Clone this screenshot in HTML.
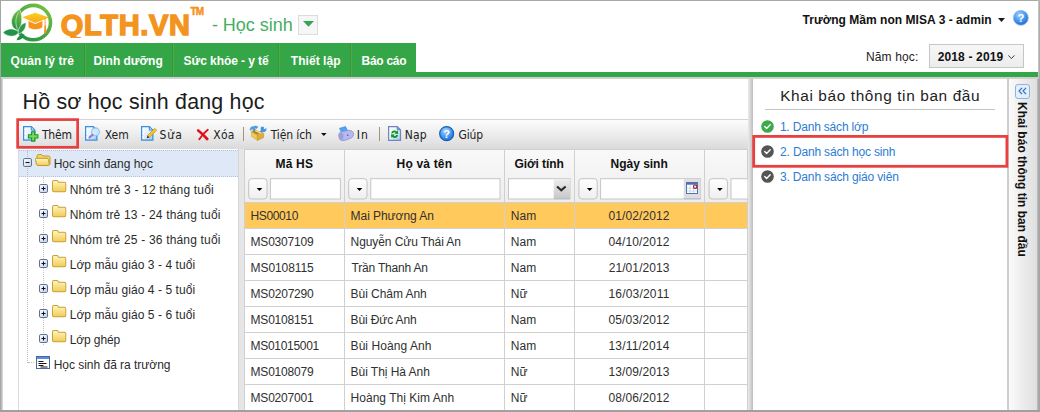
<!DOCTYPE html><html lang="vi"><head><meta charset="utf-8"><title>QLTH.VN - Học sinh</title><style>
*{box-sizing:border-box;margin:0;padding:0}
html,body{width:1040px;height:412px;overflow:hidden;background:#fff}
body{font-family:"Liberation Sans",sans-serif;position:relative}
.t{position:absolute;white-space:nowrap;line-height:20px;height:20px}
.a{position:absolute}
svg{position:absolute;overflow:visible}
</style></head><body>
<div class="a" style="left:0;top:0;width:1040px;height:43px;background:#fff"></div>
<svg style="left:0;top:0" width="60" height="46" viewBox="0 0 60 46">
<defs><linearGradient id="lg1" x1="1" y1="0" x2="0.3" y2="1"><stop offset="0" stop-color="#7cc242"/><stop offset="1" stop-color="#279646"/></linearGradient>
<linearGradient id="lg3" x1="0.6" y1="0" x2="0.3" y2="1"><stop offset="0" stop-color="#76bf43"/><stop offset="1" stop-color="#1f9247"/></linearGradient>
<linearGradient id="lg2" x1="0" y1="0" x2="0" y2="1"><stop offset="0" stop-color="#fbd01c"/><stop offset="1" stop-color="#f8a61e"/></linearGradient></defs>
<circle cx="33.300" cy="22.600" r="17.200" fill="none" stroke="url(#lg1)" stroke-width="3.600"/>
<path d="M19.600 9.300C13 13 9.500 20 12.500 26.500c1.500 2.500 4 3.800 6.300 4C22.500 24 22.800 15.500 19.600 9.300Z" fill="url(#lg3)" stroke="#fff" stroke-width=".6"/>
<path d="M18.400 12.500C15.500 17.500 15 23.500 17.600 29.500" fill="none" stroke="#e8f5e0" stroke-width=".6"/>
<path d="M3 32.400C7.500 27.800 14.500 27.600 19 32.500 15.500 37.400 7.500 37.300 3 32.400Z" fill="#229447" stroke="#fff" stroke-width=".5"/>
<path d="M26 22.600C20.500 24 17.800 28.500 18.300 34 23.500 32.500 26.300 28 26 22.600Z" fill="#2c9b47" stroke="#fff" stroke-width=".5"/>
<path d="M24.300 34.300C20.500 34.500 17.500 36.800 16.600 40.200 20.500 40.500 23.500 38 24.300 34.300Z" fill="#1f8f45"/>
<path d="M22.300 17.300L35.200 12.700L49.200 17.600L35.200 23Z" fill="url(#lg2)"/>
<path d="M28.500 21L35.200 23.900L42.400 21L42.400 27.300C38 30 32.500 30 28.500 27.300Z" fill="#f7941d"/>
<path d="M45 18.500L45.200 26" stroke="#f7941d" stroke-width=".9"/><path d="M44.400 25.500h1.500l.5 8h-2.400z" fill="#f7941d"/>
</svg>
<span id="logo" class="t" style="left:60.79px;top:14.95px;font-size:29px;font-weight:700;color:#f3941f;letter-spacing:0.679px;-webkit-text-stroke:1.5px #f3941f;">QLTH.VN</span>
<div class="a" style="left:58px;top:37.500px;width:40px;height:5.500px;background:#fff"></div>
<span id="tm" class="t" style="left:190.43px;top:1.94px;font-size:10px;font-weight:700;color:#f3941f;letter-spacing:-0.800px;-webkit-text-stroke:.5px #f3941f;">TM</span>
<span id="hs" class="t" style="left:211.91px;top:15.26px;font-size:18px;font-weight:400;color:#45ae62;letter-spacing:-0.031px;">- Học sinh</span>
<div class="a" style="left:298px;top:15px;width:20px;height:20px;background:#f6f6f6;border:1px solid #dcdcdc"></div>
<svg style="left:302.800px;top:21.200px" width="11" height="6"><path d="M0 0h11l-5.500 5.700z" fill="#2fa84f"/></svg>
<span id="user" class="t" style="left:802.50px;top:9.84px;font-size:12px;font-weight:700;color:#111;letter-spacing:0.035px;">Trường Mầm non MISA 3 - admin</span>
<svg style="left:998px;top:18px" width="7" height="4"><path d="M0 0h7l-3.500 3.900z" fill="#1a1a1a"/></svg>
<svg style="left:1013.2px;top:9.9px" width="15.7" height="15.7" viewBox="0 0 16 16"><defs><radialGradient id="hg1013.2" cx="0.4" cy="0.3" r="0.8"><stop offset="0" stop-color="#9fd0ff"/><stop offset="0.6" stop-color="#3b8ee8"/><stop offset="1" stop-color="#1c5fc0"/></radialGradient></defs><circle cx="8" cy="8" r="7.6" fill="url(#hg1013.2)" stroke="#8fb8e8" stroke-width="0.8"/><text x="8" y="12.2" text-anchor="middle" font-family="Liberation Sans, sans-serif" font-weight="700" font-size="11.5" fill="#fff">?</text></svg>
<div class="a" style="left:1px;top:43px;width:415px;height:34px;background:#35a648"></div>
<div class="a" style="left:416px;top:72px;width:624px;height:5px;background:#35a648"></div>
<div class="a" style="left:0;top:77px;width:1040px;height:2px;background:#cfcfcf"></div>
<div class="a" style="left:84px;top:43px;width:1px;height:34px;background:#2f9741"></div><div class="a" style="left:85px;top:43px;width:1px;height:34px;background:#56ab3e"></div>
<div class="a" style="left:172px;top:43px;width:1px;height:34px;background:#2f9741"></div><div class="a" style="left:173px;top:43px;width:1px;height:34px;background:#56ab3e"></div>
<div class="a" style="left:278px;top:43px;width:1px;height:34px;background:#2f9741"></div><div class="a" style="left:279px;top:43px;width:1px;height:34px;background:#56ab3e"></div>
<div class="a" style="left:350px;top:43px;width:1px;height:34px;background:#2f9741"></div><div class="a" style="left:351px;top:43px;width:1px;height:34px;background:#56ab3e"></div>
<span id="tab0" class="t" style="left:10.58px;top:51.34px;font-size:12px;font-weight:700;color:#fff;letter-spacing:0.057px;">Quản lý trẻ</span>
<span id="tab1" class="t" style="left:93.60px;top:51.34px;font-size:12px;font-weight:700;color:#fff;letter-spacing:-0.010px;">Dinh dưỡng</span>
<span id="tab2" class="t" style="left:183.60px;top:51.34px;font-size:12px;font-weight:700;color:#fff;letter-spacing:-0.067px;">Sức khỏe - y tế</span>
<span id="tab3" class="t" style="left:290.82px;top:51.34px;font-size:12px;font-weight:700;color:#fff;letter-spacing:0.051px;">Thiết lập</span>
<span id="tab4" class="t" style="left:361.60px;top:51.34px;font-size:12px;font-weight:700;color:#fff;letter-spacing:-0.285px;">Báo cáo</span>
<span id="namhoc" class="t" style="left:865.97px;top:47.09px;font-size:12px;font-weight:400;color:#222;letter-spacing:0.139px;">Năm học:</span>
<div class="a" style="left:929px;top:44px;width:95px;height:24px;border:1px solid #c6c6c6;background:linear-gradient(#f7f7f7,#ececec)"></div>
<span id="year" class="t" style="left:937.64px;top:46.64px;font-size:12px;font-weight:700;color:#111;letter-spacing:0.155px;">2018 - 2019</span>
<svg style="left:1008px;top:55px" width="7" height="5"><path d="M.4 .4L3.400 3.600L6.400 .4" fill="none" stroke="#3a3f50" stroke-width="1"/></svg>
<div class="a" style="left:0;top:79px;width:1040px;height:333px;background:#fff"></div>
<span id="title" class="t" style="left:22.55px;top:91.88px;font-size:21.4px;font-weight:400;color:#1c1c1c;letter-spacing:0.197px;">Hồ sơ học sinh đang học</span>
<div class="a" style="left:18px;top:119px;width:730px;height:30px;border-top:1px solid #d4d4d4;background:linear-gradient(#fcfcfc,#f0f0f0 40%,#dadada)"></div>
<svg width="0" height="0" style="left:0;top:0"><defs><linearGradient id="pgg" x1="0" y1="0" x2="1" y2="1"><stop offset="0" stop-color="#fff"/><stop offset=".45" stop-color="#e6f1fc"/><stop offset="1" stop-color="#9cc8f2"/></linearGradient><radialGradient id="hgr" cx="0.42" cy="0.3" r="0.75"><stop offset="0" stop-color="#a8d4ff"/><stop offset="0.55" stop-color="#4a9cf0"/><stop offset="1" stop-color="#1c66c8"/></radialGradient></defs></svg>
<svg style="left:22.7px;top:126.1px" width="17" height="16" viewBox="0 0 17 16"><path d="M.65 .65h7.700l3.500 3.500v9.900h-11.200z" fill="url(#pgg)" stroke="#3b8fe0" stroke-width="1.300"/><path d="M8.350 .65v3.500h3.500z" fill="#cfe5fa" stroke="#3b8fe0" stroke-width="1"/><path d="M2.200 2.500v2M2.200 6v2.500M2.200 10v2.500" stroke="#fff" stroke-width="1.200"/><path d="M8.600 5.700h3.200v3.100h3.100v3.200h-3.100v3.100h-3.200v-3.100h-3.100v-3.200h3.100z" fill="#78d65e" stroke="#189a1c" stroke-width="1.100"/></svg>
<svg style="left:85px;top:126.1px" width="17" height="16" viewBox="0 0 17 16"><path d="M.65 .65h7.700l3.500 3.500v9.900h-11.200z" fill="url(#pgg)" stroke="#3b8fe0" stroke-width="1.300"/><path d="M8.350 .65v3.500h3.500z" fill="#cfe5fa" stroke="#3b8fe0" stroke-width="1"/><path d="M2.200 2.500v2M2.200 6v2.500M2.200 10v2.500" stroke="#fff" stroke-width="1.200"/><circle cx="10.500" cy="5.800" r="3.900" fill="#d4eafc" fill-opacity=".92" stroke="#8cc0ee" stroke-width="1.100"/><path d="M7.600 8.800l-3.100 2.800" stroke="#8f78d8" stroke-width="2" stroke-linecap="round"/></svg>
<svg style="left:140.8px;top:126.1px" width="17" height="16" viewBox="0 0 17 16"><path d="M.65 .65h7.700l3.500 3.500v9.900h-11.200z" fill="url(#pgg)" stroke="#3b8fe0" stroke-width="1.300"/><path d="M8.350 .65v3.500h3.500z" fill="#cfe5fa" stroke="#3b8fe0" stroke-width="1"/><path d="M2.200 2.500v2M2.200 6v2.500M2.200 10v2.500" stroke="#fff" stroke-width="1.200"/><path d="M13.800 2.300l1.900 1.900-7.300 7.200-1.900-1.900z" fill="#f2c436" stroke="#c89618" stroke-width=".7"/><path d="M6.500 9.500l1.900 1.900-2.600 .8z" fill="#3a3020"/></svg>
<svg style="left:196.500px;top:128.500px" width="12" height="11" viewBox="0 0 12 11"><path d="M1.200 1.500q4.500 3.500 9 8.500" stroke="#e0121e" stroke-width="2.700" stroke-linecap="round" fill="none"/><path d="M10.800 .8q-5 4-8.500 9.400" stroke="#e0121e" stroke-width="1.900" stroke-linecap="round" fill="none"/></svg>
<svg style="left:246px;top:122px" width="24" height="22" viewBox="0 0 24 22">
<path d="M4 7.300Q4.300 4.800 7.500 4.500Q10.500 3.600 11.800 4.800L10.800 6.400Q9.500 5.800 8.800 6.300L10.700 11.800L8.600 12.500L6.700 6.800Q5.200 7 4.800 8.600Z" fill="#4aa3ec" stroke="#2f86d8" stroke-width=".5"/>
<path d="M15.200 5.200Q16.800 4.600 17.800 5.300L17.300 7L18.800 7.600L20 6.400Q20.500 8 19.300 9.200Q18.300 10 17 9.600L14.500 12L13 10.800L15.300 8.200Q14.600 6.600 15.200 5.200Z" fill="#3a96e8" stroke="#2a7ed0" stroke-width=".5"/>
<path d="M5.300 9.700L9 7.600L14.700 9.900L11.300 13.100Z" fill="#b58428"/>
<path d="M5.300 9.700L11.300 13.100L11.500 18.400L5.600 14.500Z" fill="#efcb58" stroke="#c79a2c" stroke-width=".5"/>
<path d="M11.300 13.100L14.700 9.900L17.800 11.600L17.600 15.600L11.500 18.400Z" fill="#dcae3c" stroke="#b88a22" stroke-width=".5"/>
<path d="M9.300 8.600L15.300 11.200" stroke="#f6e090" stroke-width="1.300"/>
</svg>
<svg style="left:320.800px;top:133px" width="6" height="3"><path d="M0 0h5.600l-2.800 3z" fill="#111"/></svg>
<svg style="left:337.500px;top:126.300px" width="17" height="15" viewBox="0 0 17 15"><path d="M1.500 2.300l6-1.800 2.200 4.300-6.200 2z" fill="#4ea6ee" stroke="#3a8cdc" stroke-width=".6"/><path d="M.7 9q0-2.500 3-3.300l6-1.300q5.500-.5 6 3.800 0 2.500-2.500 3.800l-6 2.300q-3 1-5-.5-1.500-1.500-1.500-4.800z" fill="#b6b8ee" stroke="#8c8ed6" stroke-width=".8"/><path d="M.9 9.500q.3-2.500 2.500-2.800 2 .2 2.200 3.300 0 3-1.800 4.300-2.800-.3-2.900-4.800z" fill="#9c9ee0"/><circle cx="9.700" cy="9.200" r=".8" fill="#54569a"/></svg>
<svg style="left:388px;top:126px" width="14" height="16" viewBox="0 0 14 16"><path d="M.6 .6h8.600l3.300 3.300v10.500h-11.900z" fill="url(#pgg)" stroke="#7484b8" stroke-width="1.200"/><path d="M9.200 .6v3.300h3.300z" fill="#5aa0ec" stroke="#7484b8" stroke-width=".8"/><path d="M3.200 7.300q.3-2.700 3.300-2.900 1.500 0 2.400 1l1-1 .3 3.600-3.600-.3 1-1q-1.600-1-2.600 .5z" fill="#0c9a1e"/><path d="M10 9q-.3 2.700-3.300 2.900-1.500 0-2.400-1l-1 1-.3-3.600 3.600 .3-1 1q1.600 1 2.600-.5z" fill="#0c9a1e"/></svg>
<svg style="left:438.9px;top:125.8px" width="15.3" height="15.3" viewBox="0 0 16 16"><circle cx="8" cy="8" r="7.300" fill="url(#hgr)" stroke="#1a5cb8" stroke-width="1.200"/><text x="8" y="12.300" text-anchor="middle" font-family="Liberation Sans, sans-serif" font-weight="700" font-size="11.500" fill="#fff">?</text></svg>
<div class="a" style="left:243.0px;top:127px;width:1px;height:14px;background:#a39676"></div>
<div class="a" style="left:379.0px;top:127px;width:1px;height:14px;background:#a39676"></div>
<span id="tb0" class="t" style="left:41.97px;top:124.64px;font-size:12px;font-weight:400;color:#222;letter-spacing:-0.223px;font-family:'DejaVu Sans Condensed','DejaVu Sans',sans-serif;">Thêm</span>
<span id="tb1" class="t" style="left:104.74px;top:124.64px;font-size:12px;font-weight:400;color:#222;letter-spacing:0.008px;font-family:'DejaVu Sans Condensed','DejaVu Sans',sans-serif;">Xem</span>
<span id="tb2" class="t" style="left:159.59px;top:124.64px;font-size:12px;font-weight:400;color:#222;letter-spacing:0.929px;font-family:'DejaVu Sans Condensed','DejaVu Sans',sans-serif;">Sửa</span>
<span id="tb3" class="t" style="left:213.36px;top:124.64px;font-size:12px;font-weight:400;color:#222;letter-spacing:0.143px;font-family:'DejaVu Sans Condensed','DejaVu Sans',sans-serif;">Xóa</span>
<span id="tb4" class="t" style="left:270.68px;top:124.64px;font-size:12px;font-weight:400;color:#222;letter-spacing:-0.098px;font-family:'DejaVu Sans Condensed','DejaVu Sans',sans-serif;">Tiện ích</span>
<span id="tb5" class="t" style="left:356.76px;top:124.64px;font-size:12px;font-weight:400;color:#222;letter-spacing:1.000px;font-family:'DejaVu Sans Condensed','DejaVu Sans',sans-serif;">In</span>
<span id="tb6" class="t" style="left:404.85px;top:124.64px;font-size:12px;font-weight:400;color:#222;letter-spacing:0.168px;font-family:'DejaVu Sans Condensed','DejaVu Sans',sans-serif;">Nạp</span>
<span id="tb7" class="t" style="left:458.42px;top:124.64px;font-size:12px;font-weight:400;color:#222;letter-spacing:-0.104px;font-family:'DejaVu Sans Condensed','DejaVu Sans',sans-serif;">Giúp</span>
<div class="a" style="left:18px;top:149px;width:1px;height:263px;background:#dcdcdc"></div>
<div class="a" style="left:19px;top:150px;width:218.500px;height:26.500px;background:#dfe8f6;border-top:1px dotted #b4c4de;border-bottom:1px dotted #b4c4de"></div>
<div class="a" style="left:237.500px;top:149px;width:7px;height:263px;background:#e6e6e6;border-left:1px solid #d6d6d6"></div>
<svg width="0" height="0" style="left:0;top:0"><defs><linearGradient id="pmg" x1="0" y1="0" x2="1" y2="1"><stop offset="0" stop-color="#fff"/><stop offset="1" stop-color="#c3cfe4"/></linearGradient><linearGradient id="fg" x1="0" y1="0" x2="0" y2="1"><stop offset="0" stop-color="#fff6c0"/><stop offset="1" stop-color="#f1cb55"/></linearGradient></defs></svg>
<div class="a" style="left:27px;top:151px;width:0;height:212px;border-left:1px dotted #bdbdbd"></div>
<div class="a" style="left:28px;top:362px;width:6px;height:0;border-top:1px dotted #bdbdbd"></div>
<div class="a" style="left:43px;top:177px;width:0;height:168px;border-left:1px dotted #c4c4c4"></div>
<span id="tr0" class="t" style="left:53.66px;top:153.84px;font-size:12px;font-weight:400;color:#2b2b2b;letter-spacing:-0.005px;">Học sinh đang học</span>
<svg style="left:23.4px;top:157.5px" width="9" height="9" viewBox="0 0 9 9"><rect x=".5" y=".5" width="8" height="8" rx="1.300" fill="url(#pmg)" stroke="#5d7198" stroke-width="1"/><path d="M2.500 4.500h4" stroke="#111" stroke-width="1"/></svg>
<svg style="left:34.5px;top:154px" width="16" height="12" viewBox="0 0 16 12"><path d="M2 10.500v-8.500q0-1.500 1.500-1.500h3l1.500 1.500h5.500q1.500 0 1.500 1.500v7" fill="#f3d36a" stroke="#c49a2c" stroke-width="1"/><path d="M3 11.500q-1.300 0-1.600-1.300l-.9-4.700q-.2-1.200 1-1.200h10.500q1.200 0 1.400 1.200l.9 4.700q.2 1.300-1.100 1.300z" fill="url(#fg)" stroke="#c49a2c" stroke-width="1"/></svg>
<span id="tr1" class="t" style="left:69.66px;top:179.84px;font-size:12px;font-weight:400;color:#2b2b2b;letter-spacing:0.185px;">Nhóm trẻ 3 - 12 tháng tuổi</span>
<svg style="left:39.2px;top:183.8px" width="9" height="9" viewBox="0 0 9 9"><rect x=".5" y=".5" width="8" height="8" rx="1.300" fill="url(#pmg)" stroke="#5d7198" stroke-width="1"/><path d="M2.500 4.500h4" stroke="#111" stroke-width="1"/><path d="M4.500 2.500v4" stroke="#111" stroke-width="1"/></svg>
<svg style="left:51.8px;top:180.1px" width="14.300" height="12.300" preserveAspectRatio="none" viewBox="0 0 15 12"><path d="M.5 10v-8q0-1.500 1.500-1.500h3q1 0 1.500 1l.5 .8h6q1.500 0 1.500 1.500v6.200q0 1.500-1.500 1.500h-11q-1.500 0-1.500-1.500z" fill="url(#fg)" stroke="#c8a033" stroke-width="1"/></svg>
<span id="tr2" class="t" style="left:69.66px;top:204.86px;font-size:12px;font-weight:400;color:#2b2b2b;letter-spacing:0.183px;">Nhóm trẻ 13 - 24 tháng tuổi</span>
<svg style="left:39.2px;top:208.82000000000002px" width="9" height="9" viewBox="0 0 9 9"><rect x=".5" y=".5" width="8" height="8" rx="1.300" fill="url(#pmg)" stroke="#5d7198" stroke-width="1"/><path d="M2.500 4.500h4" stroke="#111" stroke-width="1"/><path d="M4.500 2.500v4" stroke="#111" stroke-width="1"/></svg>
<svg style="left:51.8px;top:205.12px" width="14.300" height="12.300" preserveAspectRatio="none" viewBox="0 0 15 12"><path d="M.5 10v-8q0-1.500 1.500-1.500h3q1 0 1.500 1l.5 .8h6q1.500 0 1.500 1.500v6.200q0 1.500-1.500 1.500h-11q-1.500 0-1.500-1.500z" fill="url(#fg)" stroke="#c8a033" stroke-width="1"/></svg>
<span id="tr3" class="t" style="left:69.66px;top:229.88px;font-size:12px;font-weight:400;color:#2b2b2b;letter-spacing:0.183px;">Nhóm trẻ 25 - 36 tháng tuổi</span>
<svg style="left:39.2px;top:233.84px" width="9" height="9" viewBox="0 0 9 9"><rect x=".5" y=".5" width="8" height="8" rx="1.300" fill="url(#pmg)" stroke="#5d7198" stroke-width="1"/><path d="M2.500 4.500h4" stroke="#111" stroke-width="1"/><path d="M4.500 2.500v4" stroke="#111" stroke-width="1"/></svg>
<svg style="left:51.8px;top:230.14px" width="14.300" height="12.300" preserveAspectRatio="none" viewBox="0 0 15 12"><path d="M.5 10v-8q0-1.500 1.500-1.500h3q1 0 1.500 1l.5 .8h6q1.500 0 1.500 1.500v6.200q0 1.500-1.500 1.500h-11q-1.500 0-1.500-1.500z" fill="url(#fg)" stroke="#c8a033" stroke-width="1"/></svg>
<span id="tr4" class="t" style="left:69.66px;top:254.90px;font-size:12px;font-weight:400;color:#2b2b2b;letter-spacing:0.069px;">Lớp mẫu giáo 3 - 4 tuổi</span>
<svg style="left:39.2px;top:258.86px" width="9" height="9" viewBox="0 0 9 9"><rect x=".5" y=".5" width="8" height="8" rx="1.300" fill="url(#pmg)" stroke="#5d7198" stroke-width="1"/><path d="M2.500 4.500h4" stroke="#111" stroke-width="1"/><path d="M4.500 2.500v4" stroke="#111" stroke-width="1"/></svg>
<svg style="left:51.8px;top:255.16px" width="14.300" height="12.300" preserveAspectRatio="none" viewBox="0 0 15 12"><path d="M.5 10v-8q0-1.500 1.500-1.500h3q1 0 1.500 1l.5 .8h6q1.500 0 1.500 1.500v6.200q0 1.500-1.500 1.500h-11q-1.500 0-1.500-1.500z" fill="url(#fg)" stroke="#c8a033" stroke-width="1"/></svg>
<span id="tr5" class="t" style="left:69.66px;top:279.92px;font-size:12px;font-weight:400;color:#2b2b2b;letter-spacing:0.069px;">Lớp mẫu giáo 4 - 5 tuổi</span>
<svg style="left:39.2px;top:283.88px" width="9" height="9" viewBox="0 0 9 9"><rect x=".5" y=".5" width="8" height="8" rx="1.300" fill="url(#pmg)" stroke="#5d7198" stroke-width="1"/><path d="M2.500 4.500h4" stroke="#111" stroke-width="1"/><path d="M4.500 2.500v4" stroke="#111" stroke-width="1"/></svg>
<svg style="left:51.8px;top:280.18px" width="14.300" height="12.300" preserveAspectRatio="none" viewBox="0 0 15 12"><path d="M.5 10v-8q0-1.500 1.500-1.500h3q1 0 1.500 1l.5 .8h6q1.500 0 1.500 1.500v6.200q0 1.500-1.500 1.500h-11q-1.500 0-1.500-1.500z" fill="url(#fg)" stroke="#c8a033" stroke-width="1"/></svg>
<span id="tr6" class="t" style="left:69.66px;top:304.94px;font-size:12px;font-weight:400;color:#2b2b2b;letter-spacing:0.069px;">Lớp mẫu giáo 5 - 6 tuổi</span>
<svg style="left:39.2px;top:308.90000000000003px" width="9" height="9" viewBox="0 0 9 9"><rect x=".5" y=".5" width="8" height="8" rx="1.300" fill="url(#pmg)" stroke="#5d7198" stroke-width="1"/><path d="M2.500 4.500h4" stroke="#111" stroke-width="1"/><path d="M4.500 2.500v4" stroke="#111" stroke-width="1"/></svg>
<svg style="left:51.8px;top:305.20000000000005px" width="14.300" height="12.300" preserveAspectRatio="none" viewBox="0 0 15 12"><path d="M.5 10v-8q0-1.500 1.500-1.500h3q1 0 1.500 1l.5 .8h6q1.500 0 1.500 1.500v6.200q0 1.500-1.500 1.500h-11q-1.500 0-1.500-1.500z" fill="url(#fg)" stroke="#c8a033" stroke-width="1"/></svg>
<span id="tr7" class="t" style="left:69.66px;top:329.96px;font-size:12px;font-weight:400;color:#2b2b2b;letter-spacing:-0.098px;">Lớp ghép</span>
<svg style="left:39.2px;top:333.92px" width="9" height="9" viewBox="0 0 9 9"><rect x=".5" y=".5" width="8" height="8" rx="1.300" fill="url(#pmg)" stroke="#5d7198" stroke-width="1"/><path d="M2.500 4.500h4" stroke="#111" stroke-width="1"/><path d="M4.500 2.500v4" stroke="#111" stroke-width="1"/></svg>
<svg style="left:51.8px;top:330.22px" width="14.300" height="12.300" preserveAspectRatio="none" viewBox="0 0 15 12"><path d="M.5 10v-8q0-1.500 1.500-1.500h3q1 0 1.500 1l.5 .8h6q1.500 0 1.500 1.500v6.200q0 1.500-1.500 1.500h-11q-1.500 0-1.500-1.500z" fill="url(#fg)" stroke="#c8a033" stroke-width="1"/></svg>
<span id="tr8" class="t" style="left:53.66px;top:354.98px;font-size:12px;font-weight:400;color:#2b2b2b;letter-spacing:-0.022px;">Học sinh đã ra trường</span>
<svg style="left:36px;top:356px" width="14" height="13" viewBox="0 0 14 13"><rect x=".5" y=".5" width="13" height="12" fill="#fff" stroke="#4a66a8" stroke-width="1"/><rect x="1" y="1" width="12" height="2" fill="#5b8be0"/><path d="M2.500 5.500h5M2.500 7.500h8M2.500 9.500h5M4.500 11h7" stroke="#111" stroke-width="1"/></svg>
<div class="a" style="left:244.0px;top:149px;width:503.5px;height:53.500px;background:linear-gradient(#f9f9f9,#ededed);border-left:1px solid #d0d0d0;border-top:1px solid #d0d0d0"></div>
<div class="a" style="left:244.5px;top:202.500px;width:503.0px;height:26px;background:#ffc95c"></div>
<div class="a" style="left:244.5px;top:202.0px;width:503.0px;height:1px;background:#d0d0d0"></div>
<div class="a" style="left:244.5px;top:228.0px;width:503.0px;height:1px;background:#d0d0d0"></div>
<div class="a" style="left:244.5px;top:254.0px;width:503.0px;height:1px;background:#d0d0d0"></div>
<div class="a" style="left:244.5px;top:280.0px;width:503.0px;height:1px;background:#d0d0d0"></div>
<div class="a" style="left:244.5px;top:306.0px;width:503.0px;height:1px;background:#d0d0d0"></div>
<div class="a" style="left:244.5px;top:332.0px;width:503.0px;height:1px;background:#d0d0d0"></div>
<div class="a" style="left:244.5px;top:358.0px;width:503.0px;height:1px;background:#d0d0d0"></div>
<div class="a" style="left:244.5px;top:384.0px;width:503.0px;height:1px;background:#d0d0d0"></div>
<div class="a" style="left:244.5px;top:410.0px;width:503.0px;height:1px;background:#d0d0d0"></div>
<div class="a" style="left:244.0px;top:149.500px;width:1px;height:263px;background:#d0d0d0"></div>
<div class="a" style="left:344.0px;top:149.500px;width:1px;height:263px;background:#d0d0d0"></div>
<div class="a" style="left:504.0px;top:149.500px;width:1px;height:263px;background:#d0d0d0"></div>
<div class="a" style="left:574.0px;top:149.500px;width:1px;height:263px;background:#d0d0d0"></div>
<div class="a" style="left:703.5px;top:149.500px;width:1px;height:263px;background:#d0d0d0"></div>
<div class="a" style="left:747.0px;top:149.500px;width:1px;height:263px;background:#d0d0d0"></div>
<span id="h0" class="t" style="left:275.60px;top:154.14px;font-size:12px;font-weight:700;color:#111;letter-spacing:0.174px;">Mã HS</span>
<span id="h1" class="t" style="left:396.60px;top:154.14px;font-size:12px;font-weight:700;color:#111;letter-spacing:0.177px;">Họ và tên</span>
<span id="h2" class="t" style="left:514.50px;top:154.14px;font-size:12px;font-weight:700;color:#111;letter-spacing:-0.070px;">Giới tính</span>
<span id="h3" class="t" style="left:610.60px;top:154.14px;font-size:12px;font-weight:700;color:#111;letter-spacing:-0.023px;">Ngày sinh</span>
<svg style="left:0;top:0" width="747.5" height="412" viewBox="0 0 747.5 412"><defs><linearGradient id="fbg" x1="0" y1="0" x2="0" y2="1"><stop offset="0" stop-color="#fefefe"/><stop offset="1" stop-color="#efefef"/></linearGradient><linearGradient id="cbg" x1="0" y1="0" x2="0" y2="1"><stop offset="0" stop-color="#ededed"/><stop offset="1" stop-color="#c6c6c6"/></linearGradient></defs><rect x="248.70" y="178.70" width="18.300" height="20.30" rx="3" fill="url(#fbg)" stroke="#c2c2c2" stroke-width="1"/><path d="M256.70 188h5.600l-2.800 3.100z" fill="#000"/><rect x="270.40" y="178.70" width="70.00" height="20.30" fill="#fff" stroke="#c6c6c6" stroke-width="1"/><rect x="348.70" y="178.70" width="18.300" height="20.30" rx="3" fill="url(#fbg)" stroke="#c2c2c2" stroke-width="1"/><path d="M356.70 188h5.600l-2.800 3.100z" fill="#000"/><rect x="370.80" y="178.70" width="129.20" height="20.30" fill="#fff" stroke="#c6c6c6" stroke-width="1"/><rect x="508.50" y="178.70" width="61.50" height="20.30" fill="#fff" stroke="#c6c6c6" stroke-width="1"/><rect x="553.700" y="179.200" width="16.300" height="19.800" fill="url(#cbg)"/><path d="M553.700 198.700h16.300" stroke="#b4bcd0" stroke-width="1"/><path d="M557 186.500l4.300 3.900 4.300-3.900" fill="none" stroke="#2c2c2c" stroke-width="2.100"/><rect x="578.90" y="178.70" width="18.300" height="20.30" rx="3" fill="url(#fbg)" stroke="#c2c2c2" stroke-width="1"/><path d="M586.90 188h5.600l-2.800 3.100z" fill="#000"/><rect x="600.60" y="178.70" width="99.90" height="20.30" fill="#fff" stroke="#c6c6c6" stroke-width="1"/><rect x="683.700" y="179.200" width="16.800" height="19.800" fill="#dedede"/><path d="M683.700 198.700h16.800" stroke="#b4bcd0" stroke-width="1"/><g transform="translate(686,182)"><rect x=".5" y=".5" width="11" height="11" fill="#fff" stroke="#5474b0" stroke-width="1"/><rect x=".5" y=".5" width="11" height="2.200" fill="#4f6fb0"/><path d="M4 3v8M7.500 3v8M1 6.200h10M1 9h10" stroke="#c2cee6" stroke-width=".8"/><circle cx="9.200" cy="4.700" r="1.700" fill="#fff" stroke="#a01028" stroke-width="1.100"/></g><rect x="709.10" y="178.70" width="18.300" height="20.30" rx="3" fill="url(#fbg)" stroke="#c2c2c2" stroke-width="1"/><path d="M717.10 188h5.600l-2.800 3.100z" fill="#000"/><rect x="731.00" y="178.70" width="17.00" height="20.30" fill="#fff" stroke="#c6c6c6" stroke-width="1"/></svg>
<span id="r0a" class="t" style="left:250.57px;top:205.84px;font-size:12px;font-weight:400;color:#303030;letter-spacing:-0.377px;">HS00010</span>
<span id="r0b" class="t" style="left:350.57px;top:205.84px;font-size:12px;font-weight:400;color:#303030;letter-spacing:-0.050px;">Mai Phương An</span>
<span id="r0c" class="t" style="left:510.86px;top:205.84px;font-size:12px;font-weight:400;color:#303030;letter-spacing:0.035px;">Nam</span>
<span id="r0d" class="t" style="left:608.59px;top:205.84px;font-size:12px;font-weight:400;color:#303030;letter-spacing:0.092px;">01/02/2012</span>
<span id="r1a" class="t" style="left:250.57px;top:231.84px;font-size:12px;font-weight:400;color:#303030;letter-spacing:-0.206px;">MS0307109</span>
<span id="r1b" class="t" style="left:350.57px;top:231.84px;font-size:12px;font-weight:400;color:#303030;letter-spacing:-0.089px;">Nguyễn Cửu Thái An</span>
<span id="r1c" class="t" style="left:510.86px;top:231.84px;font-size:12px;font-weight:400;color:#303030;letter-spacing:0.035px;">Nam</span>
<span id="r1d" class="t" style="left:608.59px;top:231.84px;font-size:12px;font-weight:400;color:#303030;letter-spacing:0.092px;">04/10/2012</span>
<span id="r2a" class="t" style="left:250.57px;top:257.84px;font-size:12px;font-weight:400;color:#303030;letter-spacing:-0.075px;">MS0108115</span>
<span id="r2b" class="t" style="left:351.50px;top:257.84px;font-size:12px;font-weight:400;color:#303030;letter-spacing:-0.191px;">Trần Thanh An</span>
<span id="r2c" class="t" style="left:510.86px;top:257.84px;font-size:12px;font-weight:400;color:#303030;letter-spacing:0.035px;">Nam</span>
<span id="r2d" class="t" style="left:608.66px;top:257.84px;font-size:12px;font-weight:400;color:#303030;letter-spacing:0.089px;">21/01/2013</span>
<span id="r3a" class="t" style="left:250.57px;top:283.84px;font-size:12px;font-weight:400;color:#303030;letter-spacing:-0.189px;">MS0207290</span>
<span id="r3b" class="t" style="left:350.57px;top:283.84px;font-size:12px;font-weight:400;color:#303030;letter-spacing:-0.049px;">Bùi Châm Anh</span>
<span id="r3c" class="t" style="left:510.86px;top:283.84px;font-size:12px;font-weight:400;color:#303030;letter-spacing:0.000px;">Nữ</span>
<span id="r3d" class="t" style="left:608.44px;top:283.84px;font-size:12px;font-weight:400;color:#303030;letter-spacing:0.200px;">16/03/2011</span>
<span id="r4a" class="t" style="left:250.57px;top:309.84px;font-size:12px;font-weight:400;color:#303030;letter-spacing:-0.206px;">MS0108151</span>
<span id="r4b" class="t" style="left:350.57px;top:309.84px;font-size:12px;font-weight:400;color:#303030;letter-spacing:-0.129px;">Bùi Đức Anh</span>
<span id="r4c" class="t" style="left:510.86px;top:309.84px;font-size:12px;font-weight:400;color:#303030;letter-spacing:0.035px;">Nam</span>
<span id="r4d" class="t" style="left:608.59px;top:309.84px;font-size:12px;font-weight:400;color:#303030;letter-spacing:0.092px;">05/03/2012</span>
<span id="r5a" class="t" style="left:250.57px;top:335.84px;font-size:12px;font-weight:400;color:#303030;letter-spacing:-0.308px;">MS01015001</span>
<span id="r5b" class="t" style="left:350.57px;top:335.84px;font-size:12px;font-weight:400;color:#303030;letter-spacing:0.064px;">Bùi Hoàng Anh</span>
<span id="r5c" class="t" style="left:510.86px;top:335.84px;font-size:12px;font-weight:400;color:#303030;letter-spacing:0.035px;">Nam</span>
<span id="r5d" class="t" style="left:608.44px;top:335.84px;font-size:12px;font-weight:400;color:#303030;letter-spacing:0.193px;">13/11/2014</span>
<span id="r6a" class="t" style="left:250.57px;top:361.84px;font-size:12px;font-weight:400;color:#303030;letter-spacing:-0.206px;">MS0108079</span>
<span id="r6b" class="t" style="left:350.57px;top:361.84px;font-size:12px;font-weight:400;color:#303030;letter-spacing:-0.043px;">Bùi Thị Hà Anh</span>
<span id="r6c" class="t" style="left:510.86px;top:361.84px;font-size:12px;font-weight:400;color:#303030;letter-spacing:0.000px;">Nữ</span>
<span id="r6d" class="t" style="left:608.44px;top:361.84px;font-size:12px;font-weight:400;color:#303030;letter-spacing:0.112px;">13/09/2013</span>
<span id="r7a" class="t" style="left:250.57px;top:387.84px;font-size:12px;font-weight:400;color:#303030;letter-spacing:-0.206px;">MS0207001</span>
<span id="r7b" class="t" style="left:350.57px;top:387.84px;font-size:12px;font-weight:400;color:#303030;letter-spacing:0.020px;">Hoàng Thị Kim Anh</span>
<span id="r7c" class="t" style="left:510.86px;top:387.84px;font-size:12px;font-weight:400;color:#303030;letter-spacing:0.000px;">Nữ</span>
<span id="r7d" class="t" style="left:608.59px;top:387.84px;font-size:12px;font-weight:400;color:#303030;letter-spacing:0.092px;">08/06/2012</span>
<div class="a" style="left:748px;top:79px;width:4.500px;height:333px;background:linear-gradient(90deg,#ececec,#bdbdbd)"></div>
<span id="rpt" class="t" style="left:780.16px;top:85.86px;font-size:15.4px;font-weight:400;color:#222;letter-spacing:0.616px;">Khai báo thông tin ban đầu</span>
<div class="a" style="left:765px;top:109px;width:230px;height:1px;background:#c4c4c4"></div>
<svg style="left:761px;top:120.1px" width="13" height="13" viewBox="0 0 13 13"><circle cx="6.500" cy="6.500" r="6.300" fill="#3aaa4a"/><path d="M3.700 6.600l1.900 1.900 3.600-3.700" fill="none" stroke="#fff" stroke-width="1.400" stroke-linecap="round" stroke-linejoin="round"/></svg>
<span id="li0" class="t" style="left:779.88px;top:116.64px;font-size:12px;font-weight:400;color:#2b7cd3;letter-spacing:-0.184px;">1. Danh sách lớp</span>
<svg style="left:761px;top:145.1px" width="13" height="13" viewBox="0 0 13 13"><circle cx="6.500" cy="6.500" r="6.300" fill="#555"/><path d="M3.700 6.600l1.900 1.900 3.600-3.700" fill="none" stroke="#fff" stroke-width="1.400" stroke-linecap="round" stroke-linejoin="round"/></svg>
<span id="li1" class="t" style="left:780.04px;top:141.64px;font-size:12px;font-weight:400;color:#2b7cd3;letter-spacing:-0.163px;">2. Danh sách học sinh</span>
<svg style="left:761px;top:170.2px" width="13" height="13" viewBox="0 0 13 13"><circle cx="6.500" cy="6.500" r="6.300" fill="#555"/><path d="M3.700 6.600l1.900 1.900 3.600-3.700" fill="none" stroke="#fff" stroke-width="1.400" stroke-linecap="round" stroke-linejoin="round"/></svg>
<span id="li2" class="t" style="left:779.95px;top:166.74px;font-size:12px;font-weight:400;color:#2b7cd3;letter-spacing:-0.152px;">3. Danh sách giáo viên</span>
<div class="a" style="left:1006.500px;top:79px;width:2px;height:333px;background:#cdcdcd"></div>
<div class="a" style="left:1008.500px;top:79px;width:29px;height:333px;background:linear-gradient(90deg,#fafafa,#dedede)"></div>
<div class="a" style="left:1015px;top:84px;width:15px;height:15px;border:1px solid #8db2e3;border-radius:3px;background:#e4effc"></div>
<svg style="left:1018px;top:87px" width="9" height="8" viewBox="0 0 9 8"><path d="M4 .8L1 4l3 3.200M8 .8L5 4l3 3.200" fill="none" stroke="#2f6fc0" stroke-width="1.200"/></svg>
<div class="a" style="left:1016.400px;top:102.30px;width:12px;height:154px"><span id="vt" class="t" style="left:0;top:0;transform-origin:0 0;transform:translate(16px,0) rotate(90deg);font-size:12px;font-weight:700;color:#111;letter-spacing:0.006px">Khai báo thông tin ban đầu</span></div>
<svg style="left:0;top:0" width="1040" height="412"><rect x="17.650" y="119.600" width="60" height="27.700" fill="none" stroke="#e8403f" stroke-width="2.700"/><rect x="753.700" y="136.400" width="253.200" height="29.900" fill="none" stroke="#e8403f" stroke-width="2.800"/></svg>
<div class="a" style="left:0;top:0;width:1040px;height:1px;background:#a8a8a8"></div>
<div class="a" style="left:0;top:0;width:1px;height:79px;background:#a4a4a4"></div>
<div class="a" style="left:0;top:79px;width:3px;height:333px;background:linear-gradient(90deg,#9c9c9c,#bdbdbd 50%,#e4e4e4)"></div>
<div class="a" style="left:1038px;top:0;width:2px;height:79px;background:linear-gradient(90deg,#d8d8d8,#b0b0b0 50%,#a8a8a8)"></div>
<div class="a" style="left:1037px;top:79px;width:3px;height:333px;background:linear-gradient(90deg,#c4c4c4,#aaa 40%,#a4a4a4)"></div>
<div class="a" style="left:0;top:410px;width:1040px;height:2px;background:#a0a0a0"></div>
</body></html>
